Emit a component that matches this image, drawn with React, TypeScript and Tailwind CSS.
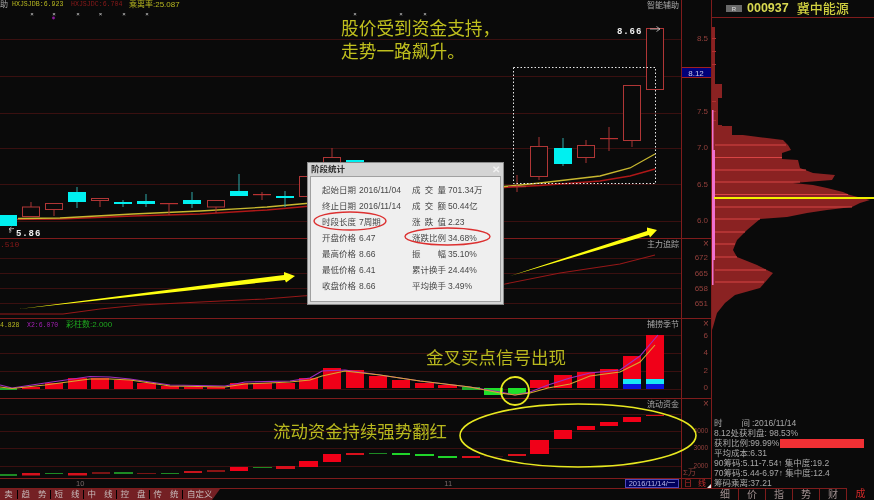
import React from 'react';

const GRID = '#3a1010';
const AXIS = '#93403c';

// x, width, body top, body bottom, wick top, wick bottom, kind
const candles: [number, number, number, number, number, number, string][] = [
  [0, 17, 215, 226, 215, 226, 'c'],
  [22, 18, 206.5, 217, 202, 217, 'h'],
  [45, 18, 203, 210, 203, 216, 'h'],
  [68, 18, 192, 202, 187, 208, 'c'],
  [91, 18, 198, 201, 198, 207, 'h'],
  [114, 18, 202, 204, 200, 207, 'c'],
  [137, 18, 201, 204, 194, 207, 'c'],
  [160, 18, 203, 204, 203, 215, 'h'],
  [183, 18, 200, 204, 192, 208, 'c'],
  [207, 18, 200, 207.5, 200, 213, 'h'],
  [230, 18, 191, 196, 174, 196, 'c'],
  [253, 18, 194, 195, 192, 200, 'h'],
  [276, 18, 196, 198, 191, 207, 'c'],
  [299, 18, 176, 197, 176, 197, 'h'],
  [323, 18, 157, 175, 148, 175, 'h'],
  [346, 18, 160, 175, 160, 175, 'c'],
  [508, 18, 186, 187, 175, 192, 'h'],
  [530, 18, 146, 177, 137, 180, 'h'],
  [554, 18, 148, 164, 138, 166, 'c'],
  [577, 18, 145, 158, 140, 163, 'h'],
  [600, 18, 138, 139, 127, 151, 'h'],
  [623, 18, 85, 141, 85, 147, 'h'],
  [646, 18, 28, 90, 28, 90, 'h'],
];

// x, width, top, bottom, colour
const macd: [number, number, number, number, string][] = [
  [0, 17, 388, 390, '#1fa82a'],
  [22, 18, 387, 389, '#f00018'],
  [45, 18, 383, 389, '#f00018'],
  [68, 19, 378, 389, '#f00018'],
  [91, 18, 378, 389, '#f00018'],
  [114, 19, 380, 389, '#f00018'],
  [137, 19, 383, 389, '#f00018'],
  [161, 18, 386, 389, '#f00018'],
  [184, 19, 387, 389, '#f00018'],
  [207, 18, 387, 389, '#f00018'],
  [230, 18, 383, 389, '#f00018'],
  [253, 19, 383, 389, '#f00018'],
  [276, 19, 383, 389, '#f00018'],
  [299, 19, 378, 389, '#f00018'],
  [323, 18, 368, 389, '#f00018'],
  [346, 18, 370, 388, '#f00018'],
  [369, 18, 376, 388, '#f00018'],
  [392, 18, 380, 388, '#f00018'],
  [415, 19, 383, 388, '#f00018'],
  [438, 19, 385, 388, '#f00018'],
  [462, 18, 387, 390, '#1fa82a'],
  [484, 19, 388, 395, '#1fe02a'],
  [508, 18, 388, 394, '#1fe02a'],
  [530, 19, 380, 388, '#f00018'],
  [554, 18, 375, 388, '#f00018'],
  [577, 18, 372, 388, '#f00018'],
  [600, 18, 369, 388, '#f00018'],
  [623, 18, 356, 379, '#f00018'],
  [623, 18, 379, 384, '#19e6f5'],
  [623, 18, 384, 389, '#0a14e0'],
  [646, 18, 335, 379, '#f00018'],
  [646, 18, 379, 384, '#19e6f5'],
  [646, 18, 384, 389, '#0a14e0'],
];

const flow: [number, number, number, number, string][] = [
  [0, 17, 474, 476, '#1d8a24'],
  [22, 18, 473, 475.5, '#d8101c'],
  [45, 18, 473, 474, '#1d8a24'],
  [68, 19, 473, 475.5, '#d8101c'],
  [92, 18, 472, 474, '#7a1414'],
  [114, 19, 472, 474, '#1d8a24'],
  [137, 19, 473, 474, '#7a1414'],
  [161, 18, 473, 474, '#1d8a24'],
  [184, 18, 471, 473, '#c8141c'],
  [207, 18, 470, 472, '#8a1414'],
  [230, 18, 467, 471, '#f00018'],
  [253, 19, 467, 468, '#1d8a24'],
  [276, 19, 466, 469, '#d8101c'],
  [299, 19, 461, 467, '#f00018'],
  [323, 18, 454, 462, '#f00018'],
  [346, 18, 453, 455, '#d8101c'],
  [369, 18, 453, 454, '#1d8a24'],
  [392, 18, 453, 455, '#1fd42a'],
  [415, 19, 454, 456, '#1fd42a'],
  [438, 19, 456, 458, '#1fd42a'],
  [462, 18, 456, 458, '#d8101c'],
  [484, 19, 456, 457, '#3a1010'],
  [508, 18, 454, 456, '#d8101c'],
  [530, 19, 440, 454, '#f00018'],
  [554, 18, 430, 439, '#f00018'],
  [577, 18, 426, 430, '#f00018'],
  [600, 18, 422, 426, '#f00018'],
  [623, 18, 417, 422, '#f00018'],
  [646, 18, 415, 416, '#d8101c'],
];

const chipShape =
  '712,27 715,27 715,84 722,84 722,98 718,98 718,125 722,125 722,126 732,126 732,135 743,135 767,138 783,140 788,145 791,150 782,153 782,159 798,160 800,168 813,173 835,175 832,180 793,183 813,185 827,188 843,192 850,195 870,200 860,203 852,207 827,210 807,213 787,217 760,219 747,230 737,240 733,250 737,257 757,265 773,273 767,280 760,288 735,295 725,303 717,313 713,327 712,330';
const chipStripes: [number, number][] = [
  [145, 786], [157.5, 782], [170, 806], [182, 800], [194.5, 848], [207, 852], [219, 760], [232, 745],
  [244, 735], [257, 737], [270, 766], [282, 764],
];

function Pane({ y, h, className, label, axis, children }: {
  y: number; h: number; className: string; label: string; axis: React.ReactNode; children: React.ReactNode;
}) {
  return (
    <div className={`flex shrink-0 border-b border-[#7f1c1c] ${className}`}>
      <div className="relative w-[681px]">
        <svg className="block h-full w-full" viewBox={`0 ${y} 681 ${h}`}>{children}</svg>
        <span className="absolute right-[2px] top-[1px] text-[8px] leading-[10px] text-[#a8a8a8]">{label}</span>
      </div>
      <div className="w-[31px] border-x border-[#7f1c1c]">
        <svg className="block h-full w-full" viewBox={`682 ${y} 29 ${h}`}>{axis}</svg>
      </div>
    </div>
  );
}

function Grid({ ys }: { ys: number[] }) {
  return <>{ys.map((v) => <line key={v} x1="0" x2="681" y1={v + 0.5} y2={v + 0.5} stroke={GRID} />)}</>;
}

function Ticks({ labels, cross, size = 8 }: { labels: [string, number][]; cross?: number; size?: number }) {
  return (
    <>
      {cross !== undefined && <text x="706" y={cross + 3} textAnchor="middle" fontSize="10" fill={AXIS}>×</text>}
      {labels.map(([t, v]) => (
        <text key={t} x="708" y={v + 3} textAnchor="end" fontSize={size} fill={AXIS}>{t}</text>
      ))}
    </>
  );
}

function Blocks({ data }: { data: [number, number, number, number, string][] }) {
  return <>{data.map(([x, w, t, b, c], i) => <rect key={i} x={x} y={t} width={w} height={b - t} fill={c} />)}</>;
}

const stats: [string, string, string, string][] = [
  ['起始日期', '2016/11/04', '成 交 量', '701.34万'],
  ['终止日期', '2016/11/14', '成 交 额', '50.44亿'],
  ['时段长度', '7周期', '涨 跌 值', '2.23'],
  ['开盘价格', '6.47', '涨跌比例', '34.68%'],
  ['最高价格', '8.66', '振 幅', '35.10%'],
  ['最低价格', '6.41', '累计换手', '24.44%'],
  ['收盘价格', '8.66', '平均换手', '3.49%'],
];

const chipInfo = ['8.12处获利盘: 98.53%', '', '平均成本:6.31', '90筹码:5.11-7.54↑ 集中度:19.2', '70筹码:5.44-6.97↑ 集中度:12.4', '筹码乘离:37.21'];

export default function App() {
  return (
    <div className="relative flex h-[500px] w-[874px] overflow-hidden bg-[#0a0a0a] blur-[0.35px] font-['Liberation_Sans','Noto_Sans_CJK_SC',sans-serif]">
      {/* Left: chart panes */}
      <div className="flex w-[712px] shrink-0 flex-col">
        <Pane
          y={0}
          h={238}
          className="h-[239px]"
          label="智能辅助"
          axis={
            <>
              <Ticks labels={[['8.5', 38], ['7.5', 111], ['7.0', 147], ['6.5', 184], ['6.0', 220]]} />
              <rect x="681" y="67.5" width="31" height="10" fill="#000078" stroke="#a02020" />
              <text x="696" y="75.5" textAnchor="middle" fontSize="8" fill="#c8c8ea">8.12</text>
            </>
          }
        >
          <Grid ys={[39, 76, 113, 148, 184, 221]} />
          <polyline points="0,219.5 60,219 133,216 200,214 267,210 300,207 510,187 540,185.5 600,181 630,176 655,169" fill="none" stroke="#b01818" strokeWidth="1.4" />
          <polyline points="18,218.5 60,218 133,214 200,211 267,207 300,204 510,186 540,183 600,176 630,168 655,154" fill="none" stroke="#c8b830" strokeWidth="1.3" />
          {candles.map(([x, w, t, b, wt, wb, k], i) => {
            const cyan = k === 'c';
            const mid = x + w / 2;
            return (
              <g key={i}>
                <line x1={mid} x2={mid} y1={wt} y2={wb} stroke={cyan ? '#2fa8a8' : '#a83434'} />
                {cyan ? (
                  <rect x={x} y={t} width={w} height={b - t} fill="#00f0f0" />
                ) : b - t < 2 ? (
                  <rect x={x} y={t} width={w} height="1.2" fill="#b83232" />
                ) : (
                  <rect x={x + 0.5} y={t + 0.5} width={w - 1} height={b - t - 1} fill="#0a0a0a" stroke="#b03636" />
                )}
              </g>
            );
          })}
          <rect x="513.5" y="67.5" width="142" height="116" fill="none" stroke="#e8e8e8" strokeDasharray="1.5 2" />
          {[32, 54, 78, 100.5, 124, 147, 355, 401, 425].map((x) => (
            <text key={x} x={x} y="16" textAnchor="middle" fontSize="6" fill="#d8d8d8">×</text>
          ))}
          <circle cx="53.5" cy="18" r="1.4" fill="#8a1a9a" />
          <path d="M9 229 l5 -0.5 M9 229 l2.5 -2 M9 229 l2.5 2 M10 229 v4" stroke="#c8c8c8" strokeWidth="0.8" fill="none" />
          <path d="M650 29 h10 M656.5 26.5 l3.5 2.5 l-3.5 2.5" stroke="#c8c8c8" strokeWidth="0.8" fill="none" />
          <text x="16" y="236" fontSize="9" fontWeight="700" letterSpacing="0.9" fill="#f0f0f0" fontFamily="Liberation Mono">5.86</text>
          <text x="617" y="33.5" fontSize="9" fontWeight="700" letterSpacing="0.9" fill="#f0f0f0" fontFamily="Liberation Mono">8.66</text>
        </Pane>
        <Pane
          y={239}
          h={79}
          className="h-[80px]"
          label="主力追踪"
          axis={<Ticks cross={244} labels={[['672', 257], ['665', 273], ['658', 288], ['651', 303]]} />}
        >
          <Grid ys={[258, 273, 288, 303]} />
          <polyline points="0,314 63,314 100,309 140,305 200,302 265,299 302,296 505,284 560,273 620,264 655,255" fill="none" stroke="#961818" strokeWidth="1.1" />
          <text x="0" y="247" fontSize="8" fill="#8a1a1a" fontFamily="Liberation Mono">.510</text>
        </Pane>
        <Pane
          y={319}
          h={79}
          className="h-[80px]"
          label="捕捞季节"
          axis={<Ticks cross={324} labels={[['6', 335], ['4', 352], ['2', 370], ['0', 387]]} />}
        >
          <Grid ys={[335, 353, 371, 389]} />
          <Blocks data={macd} />
          <polyline points="0,385 12,388 45,383 90,376.5 110,377 130,379 170,385 225,386 245,382 290,381 310,378 322,371 345,370 380,375 420,381 470,387 500,392 515,395 530,392 548,385 570,378 590,373 620,370 640,356 658,335" fill="none" stroke="#a02cc0" strokeWidth="1.1" />
          <polyline points="0,387 12,388.5 45,385 90,379 110,379 130,380 170,386 225,387 245,384 290,382 310,380 322,376 345,371 380,375 420,381 470,387 500,393 515,395 530,393 548,388 570,384 590,376 620,372 640,362 655,345" fill="none" stroke="#d8a830" strokeWidth="1.1" />
          <text x="0" y="327" fontSize="6.5" fill="#b8b820" fontFamily="Liberation Mono">4.828</text>
          <text x="27" y="327" fontSize="6.5" fill="#a020b0" fontFamily="Liberation Mono">X2:6.070</text>
          <text x="66" y="327" fontSize="8" fill="#1fa81f">彩柱数:2.000</text>
        </Pane>
        <Pane
          y={399}
          h={79}
          className="h-[80px]"
          label="流动资金"
          axis={
            <>
              <Ticks cross={404} size={6.5} labels={[['4000', 430], ['3000', 447], ['2000', 465]]} />
              <text x="683" y="475" fontSize="8" fill={AXIS}>Σ万</text>
            </>
          }
        >
          <Grid ys={[414, 431, 448, 466]} />
          <Blocks data={flow} />
        </Pane>

        {/* Date ruler */}
        <div className="flex h-[10px] shrink-0 border-b border-[#7f1c1c]">
          <div className="flex w-[681px] items-center pr-[2px] text-[7.5px] leading-none text-[#7a6a6a]">
            <span className="ml-[76px]">10</span>
            <span className="ml-[360px]">11</span>
            <span className="ml-auto flex h-[9px] w-[54px] items-center justify-center border border-[#5048b8] bg-[#00005c] text-[#b8b8e8]">2016/11/14/一</span>
          </div>
          <div className="relative flex w-[31px] items-center gap-[6px] border-x border-[#7f1c1c] pl-[2px] text-[8px] leading-none text-[#c02c2c]">
            <span>日</span>
            <span>线</span>
            <span className="absolute bottom-0 right-0 h-[4px] w-[4px] bg-[#e8e8e8] [clip-path:polygon(100%_0,100%_100%,0_100%)]"></span>
          </div>
        </div>

        {/* Period tabs */}
        <div className="flex h-[11px] shrink-0">
          <div className="flex w-[220px] items-center bg-[#742024] text-[8.5px] leading-none text-[#c8bcbc] [clip-path:polygon(0_0,100%_0,calc(100%-8px)_100%,0_100%)]">
            <span className="flex w-[18px] justify-center border-r border-black">卖</span>
            {['趋 势', '短 线', '中 线', '控 盘', '传 统'].map((t) => (
              <span key={t} className="flex w-[33px] justify-center gap-2 border-r border-black">
                {t.split(' ').map((c) => <span key={c}>{c}</span>)}
              </span>
            ))}
            <span className="pl-[4px]">自定义</span>
          </div>
        </div>
      </div>

      {/* Right: chip distribution sidebar */}
      <div className="flex min-w-0 flex-1 flex-col">
        <div className="flex h-[18px] shrink-0 items-center border-b border-[#7f1c1c] pl-[14px] leading-none">
          <span className="flex h-[7px] w-[16px] items-center justify-center bg-[#6a6a6a] text-[6px] text-[#e0e0e0]">R</span>
          <span className="ml-[5px] text-[12.5px] font-bold text-[#d8d850]">000937</span>
          <span className="ml-[8px] text-[13px] font-medium text-[#d0d040]">冀中能源</span>
        </div>
        <svg className="block h-[312px] w-[162px] shrink-0" viewBox="712 18 162 312">
          <polygon points={chipShape} fill="#8a2222" />
          {chipStripes.map(([y, x]) => (
            <line key={y} x1="715" x2={x} y1={y} y2={y} stroke="#d84444" />
          ))}
          {[38, 51, 64, 101, 111, 120].map((y) => (
            <line key={y} x1="712" x2="716" y1={y + 0.5} y2={y + 0.5} stroke="#b03030" />
          ))}
          <rect x="712" y="110" width="1.5" height="40" fill="#f070d0" />
          <rect x="712" y="150" width="3" height="110" fill="#f070d0" />
          <rect x="712" y="260" width="1.5" height="25" fill="#f070d0" />
          <rect x="714" y="197" width="160" height="2" fill="#f0f000" />
        </svg>
        <div className="mt-[88px] flex flex-col pl-[2px] text-[8.5px] leading-[10px] text-[#a8a8a8]">
          <div className="flex"><span className="flex w-[38px] justify-between pr-[2px]"><span>时</span><span>间</span></span><span>:2016/11/14</span></div>
          <div>{chipInfo[0]}</div>
          <div className="flex items-center">
            <span className="w-[66px]">获利比例:99.99%</span>
            <span className="h-[9px] w-[84px] bg-[#f03034]"></span>
          </div>
          {chipInfo.slice(2).map((t) => <div key={t}>{t}</div>)}
        </div>
        <div className="mt-auto flex h-[12px] shrink-0 text-[10px] leading-[12px] text-[#a09090]">
          {['细', '价', '指', '势', '财'].map((t) => (
            <span key={t} className="flex w-[27px] justify-center border-r border-t border-[#7f1c1c]">{t}</span>
          ))}
          <span className="flex w-[27px] justify-center text-[#d02828]">成</span>
        </div>
      </div>

      {/* Statistics dialog */}
      <div className="absolute left-[307px] top-[162px] flex h-[143px] w-[197px] flex-col border border-[#8c8c8c] bg-[#d4d4d4] px-[2px] pb-[2px]">
        <div className="flex h-[13px] shrink-0 items-center justify-between pl-[1px] pr-[1px] text-[8.5px] font-bold text-[#303030]">
          <span>阶段统计</span>
          <span className="text-[10px] leading-none text-[#f0f0f0]">✕</span>
        </div>
        <div className="grid flex-1 grid-cols-[37px_53px_36px_1fr] content-start border border-[#a0a0a0] bg-[#efefef] pl-[11px] pt-[5px] text-[8.5px] leading-[16px] text-[#484848]">
          {stats.map(([a, b, c, d]) => (
            <React.Fragment key={a}>
              <span>{a}</span>
              <span>{b}</span>
              <span className="flex justify-between pr-[2px]">{c.split(' ').map((s) => <span key={s}>{s}</span>)}</span>
              <span>{d}</span>
            </React.Fragment>
          ))}
        </div>
      </div>

      {/* Annotations drawn on top of the chart */}
      <svg className="pointer-events-none absolute left-0 top-0 h-[500px] w-[874px]" viewBox="0 0 874 500">
        <polygon points="19,309 284,275 284,272 295,276 286,282.5 285,280" fill="#ffff10" />
        <polygon points="510,276 647,231 647,227.5 657,230 650,237.5 649,235" fill="#ffff10" />
        <ellipse cx="350" cy="221" rx="36" ry="9" fill="none" stroke="#dc3030" strokeWidth="1.4" />
        <ellipse cx="447.5" cy="236.5" rx="42.5" ry="8.5" fill="none" stroke="#dc3030" strokeWidth="1.4" />
        <circle cx="515" cy="391" r="14" fill="none" stroke="#e8e820" strokeWidth="1.8" />
        <ellipse cx="578" cy="435.5" rx="118" ry="31.5" fill="none" stroke="#e8e820" strokeWidth="1.6" />
      </svg>

      <div className="absolute left-0 top-0 flex h-[10px] items-center text-[8px] leading-none">
        <span className="w-[12px] text-[#a8a8a8]">助</span>
        <span className="w-[59px] font-['Liberation_Mono',monospace] text-[6.6px] text-[#b8b820]">HXJSJDB:6.923</span>
        <span className="w-[58px] font-['Liberation_Mono',monospace] text-[6.6px] text-[#8a1a1a]">HXJSJDC:6.704</span>
        <span className="text-[#b8b820]">乘离率:25.087</span>
      </div>
      <p className="absolute left-[341px] top-[18px] text-[17.7px] leading-[23px] text-[#c0c01e]">
        股价受到资金支持，<br />走势一路飙升。
      </p>
      <p className="absolute left-[426px] top-[347px] text-[17.5px] leading-[23px] text-[#b8b81e]">金叉买点信号出现</p>
      <p className="absolute left-[273px] top-[421px] text-[17.4px] leading-[23px] text-[#b8b81e]">流动资金持续强势翻红</p>
    </div>
  );
}
